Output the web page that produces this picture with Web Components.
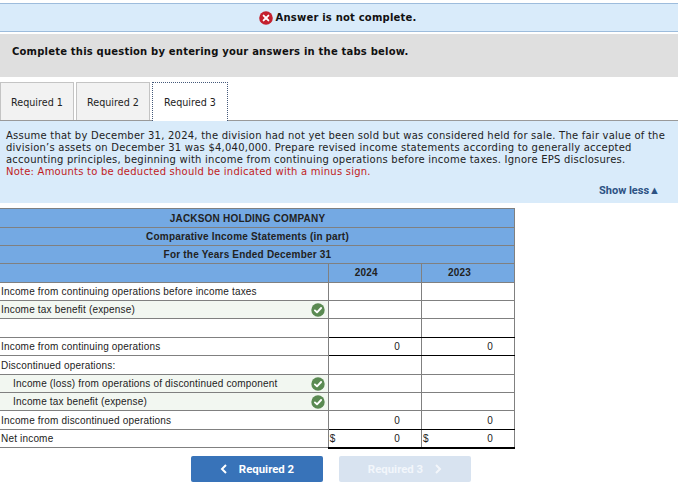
<!DOCTYPE html>
<html>
<head>
<meta charset="utf-8">
<title>Income statements</title>
<style>
  body { margin: 0; background: #fff; font-family: "DejaVu Sans", sans-serif; }
  .page { width: 678px; padding-top: 3px; }
</style>
</head>
<body>
<div class="page">
  <answer-banner>Answer is not complete.</answer-banner>
  <instruction-bar>Complete this question by entering your answers in the tabs below.</instruction-bar>
  <tab-strip>
    <tab-item>Required 1</tab-item>
    <tab-item>Required 2</tab-item>
    <tab-item active>Required 3</tab-item>
  </tab-strip>
  <question-panel>
    Assume that by December 31, 2024, the division had not yet been sold but was considered held for sale. The fair value of the division’s assets on December 31 was $4,040,000. Prepare revised income statements according to generally accepted accounting principles, beginning with income from continuing operations before income taxes. Ignore EPS disclosures.
    <span slot="note">Note: Amounts to be deducted should be indicated with a minus sign.</span>
  </question-panel>
  <income-table></income-table>
  <nav-row>
    <nav-button dir="prev">Required 2</nav-button>
    <nav-button dir="next" disabled>Required 3</nav-button>
  </nav-row>
</div>

<script>
class AnswerBanner extends HTMLElement {
  connectedCallback() {
    this.attachShadow({ mode: 'open' });
    this.shadowRoot.innerHTML = `
      <style>
        :host {
          display: flex;
          justify-content: center;
          align-items: center;
          gap: 3px;
          height: 27px;
          padding-right: 3px;
          background: #d9ebfa;
          border-top: 1px solid #9dbcdc;
          border-bottom: 1px solid #9dbcdc;
          font: bold 10px "DejaVu Sans", sans-serif;
          letter-spacing: 0.2px;
          color: #111;
        }
        svg { width: 14px; height: 14px; }
      </style>
      <svg viewBox="0 0 14 14">
        <circle cx="7" cy="7" r="6.8" fill="#c4202e"/>
        <path d="M4.6 4.6 9.4 9.4M9.4 4.6 4.6 9.4" stroke="#fff" stroke-width="1.9" stroke-linecap="round"/>
      </svg>
      <slot></slot>
    `;
  }
}
customElements.define('answer-banner', AnswerBanner);

class InstructionBar extends HTMLElement {
  connectedCallback() {
    this.attachShadow({ mode: 'open' });
    this.shadowRoot.innerHTML = `
      <style>
        :host {
          display: block;
          height: 43px;
          margin-top: 2px;
          padding-left: 12px;
          box-sizing: border-box;
          background: #dfdfdf;
          font: bold 10px/36px "DejaVu Sans", sans-serif;
          letter-spacing: 0.2px;
          color: #111;
        }
      </style>
      <slot></slot>
    `;
  }
}
customElements.define('instruction-bar', InstructionBar);

class TabStrip extends HTMLElement {
  connectedCallback() {
    this.attachShadow({ mode: 'open' });
    this.shadowRoot.innerHTML = `
      <style>
        :host {
          display: flex;
          gap: 2px;
          height: 39px;
          margin-top: 5px;
          box-sizing: border-box;
          border-bottom: 1px solid #999;
        }
      </style>
      <slot></slot>
    `;
  }
}
customElements.define('tab-strip', TabStrip);

class TabItem extends HTMLElement {
  connectedCallback() {
    this.attachShadow({ mode: 'open' });
    this.shadowRoot.innerHTML = `
      <style>
        :host {
          display: block;
          width: 74px;
          height: 38px;
          box-sizing: border-box;
          background: #f2f2f2;
          border: 1px solid #c4c4c4;
          border-bottom: 0;
          text-align: center;
          font: 9.6px/40px "DejaVu Sans", sans-serif;
          color: #222;
        }
        :host([active]) {
          width: 76px;
          height: 39px;
          background: #fff;
          border: 1px dotted #44597a;
          border-bottom: 0;
          position: relative;
          z-index: 1;
        }
      </style>
      <slot></slot>
    `;
  }
}
customElements.define('tab-item', TabItem);

class QuestionPanel extends HTMLElement {
  connectedCallback() {
    this.attachShadow({ mode: 'open' });
    this.shadowRoot.innerHTML = `
      <style>
        :host {
          display: block;
          height: 82px;
          box-sizing: border-box;
          padding: 9px 6px 0;
          background: #d9ebfa;
          font: 10px/12px "DejaVu Sans", sans-serif;
          letter-spacing: 0.225px;
          color: #222;
        }
        .note { display: block; color: #c11c1c; }
        .more {
          margin-top: 7px;
          padding-right: 12px;
          text-align: right;
          letter-spacing: 0;
          font: bold 11px/12px "Roboto", sans-serif;
          color: #2d5283;
        }
      </style>
      <slot></slot>
      <span class="note"><slot name="note"></slot></span>
      <div class="more">Show less▲</div>
    `;
  }
}
customElements.define('question-panel', QuestionPanel);

class CheckMark extends HTMLElement {
  connectedCallback() {
    this.attachShadow({ mode: 'open' });
    this.shadowRoot.innerHTML = `
      <style>
        :host { display: block; width: 14px; height: 14px; }
        svg { display: block; width: 14px; height: 14px; }
      </style>
      <svg viewBox="0 0 14 14">
        <circle cx="7" cy="7" r="6.7" fill="#5a8a52"/>
        <path d="M3.9 7.4 6 9.3 10.1 5" fill="none" stroke="#fff" stroke-width="1.9" stroke-linecap="round" stroke-linejoin="round"/>
      </svg>
    `;
  }
}
customElements.define('check-mark', CheckMark);

// dark: black rule under the number cells
const ROWS = [
  { label: 'Income from continuing operations before income taxes', h: 18 },
  { label: 'Income tax benefit (expense)', checked: true, h: 18 },
  { label: '', dark: true, h: 19 },
  { label: 'Income from continuing operations', a: '0', b: '0', dark: true, h: 18 },
  { label: 'Discontinued operations:', h: 19 },
  { label: 'Income (loss) from operations of discontinued component', indent: true, checked: true, h: 18 },
  { label: 'Income tax benefit (expense)', indent: true, checked: true, h: 18 },
  { label: 'Income from discontinued operations', a: '0', b: '0', dark: true, h: 19 },
  { label: 'Net income', a: '0', b: '0', dollar: true, total: true, h: 18 }
];

class IncomeTable extends HTMLElement {
  connectedCallback() {
    this.attachShadow({ mode: 'open' });
    const rows = ROWS.map(r => {
      const cls = (r.dark ? 'dark ' : '') + (r.total ? 'total' : '');
      const sign = r.dollar ? '<span class="sign">$</span>' : '';
      return `
        <tr style="height:${r.h}px">
          <td class="label${r.checked ? ' ok' : ''}${r.indent ? ' indent' : ''}">
            <div class="cell"><span>${r.label}</span>${r.checked ? '<check-mark></check-mark>' : ''}</div>
          </td>
          <td class="num ${cls}">${sign}${r.a || ''}</td>
          <td class="num ${cls}">${sign}${r.b || ''}</td>
        </tr>`;
    }).join('');
    this.shadowRoot.innerHTML = `
      <style>
        :host {
          display: block;
          width: 515px;
          margin-top: 5px;
          font: 10px "Liberation Sans", Arial, sans-serif;
          letter-spacing: 0.18px;
          color: #222;
        }
        table { width: 515px; border-collapse: collapse; table-layout: fixed; }
        td, th { border: 1px solid #808080; padding: 0; }
        th { background: #74a9e3; font-weight: bold; font-size: 10px; letter-spacing: 0.2px; color: #222; text-align: center; }
        .label { border-left: 0; padding-left: 1px; }
        th.span { border-left: 0; padding-right: 19px; }
        th.first { border-left: 0; }
        th.year { padding: 0 17px 1px 0; }
        .ok { background: #f2f7f1; }
        .indent { padding-left: 13px; }
        .cell { display: flex; justify-content: space-between; align-items: center; padding-right: 3px; }
        .num { position: relative; text-align: right; padding-right: 21px; }
        .dark { border-bottom-color: #000; }
        .total { border-bottom: 2px solid #000; }
        .sign { position: absolute; left: 1px; top: 3px; }
      </style>
      <table>
        <colgroup><col style="width:328px"><col style="width:93px"><col style="width:93px"></colgroup>
        <tr style="height:19px"><th class="span" colspan="3">JACKSON HOLDING COMPANY</th></tr>
        <tr style="height:18px"><th class="span" colspan="3">Comparative Income Statements (in part)</th></tr>
        <tr style="height:18px"><th class="span" colspan="3">For the Years Ended December 31</th></tr>
        <tr style="height:19px"><th class="first"></th><th class="year">2024</th><th class="year">2023</th></tr>
        ${rows}
      </table>
    `;
  }
}
customElements.define('income-table', IncomeTable);

class NavRow extends HTMLElement {
  connectedCallback() {
    this.attachShadow({ mode: 'open' });
    this.shadowRoot.innerHTML = `
      <style>
        :host { display: flex; gap: 16px; margin-top: 7px; padding-left: 191px; }
      </style>
      <slot></slot>
    `;
  }
}
customElements.define('nav-row', NavRow);

class NavButton extends HTMLElement {
  connectedCallback() {
    this.attachShadow({ mode: 'open' });
    const prev = this.getAttribute('dir') === 'prev';
    const chevron = `<svg viewBox="0 0 8 10"><path d="${prev ? 'M6 1 2 5l4 4' : 'M2 1l4 4-4 4'}" fill="none" stroke="#fff" stroke-width="2"/></svg>`;
    this.shadowRoot.innerHTML = `
      <style>
        :host {
          display: flex;
          justify-content: center;
          align-items: center;
          gap: 11px;
          width: 132px;
          height: 26px;
          border-radius: 2px;
          background: #3873b9;
          font: bold 11.4px "Roboto", sans-serif;
          color: #fff;
        }
        :host([disabled]) { background: #d8e3f0; color: #f2f6fb; }
        :host([disabled]) svg { opacity: .7; }
        svg { width: 8px; height: 10px; }
      </style>
      ${prev ? chevron : ''}<slot></slot>${prev ? '' : chevron}
    `;
  }
}
customElements.define('nav-button', NavButton);
</script>
</body>
</html>
